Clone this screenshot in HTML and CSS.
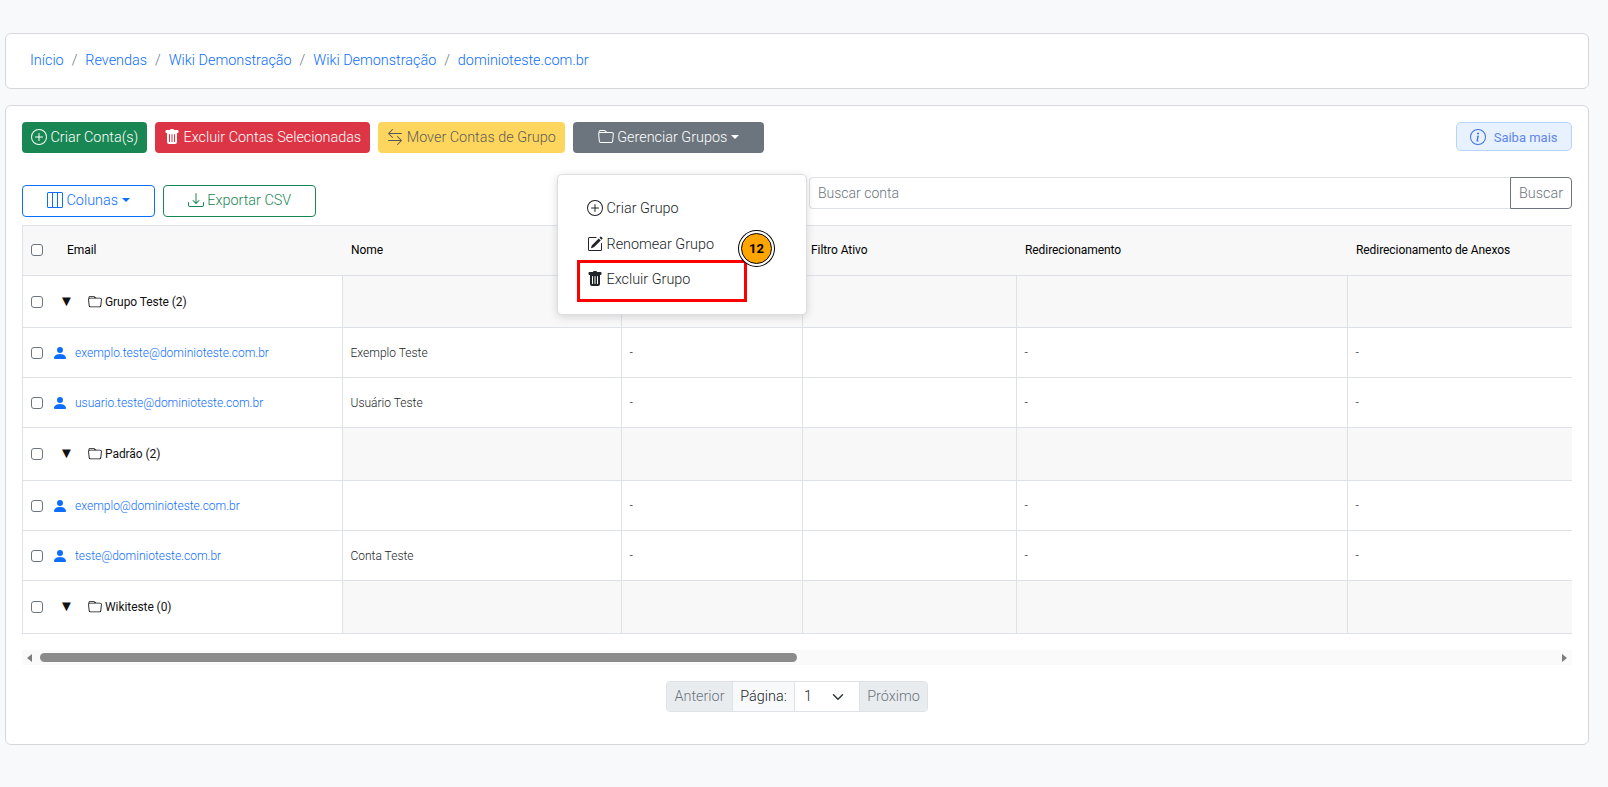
FILE: index.html
```html
<!DOCTYPE html>
<html lang="pt-BR">
<head>
    <meta charset="UTF-8">
    <meta name="viewport" content="width=device-width, initial-scale=1.0">
    <title>Contas de Email</title>
    <link rel="stylesheet" href="styles.css">
</head>
<body>
    <!-- icons -->
    <svg class="sprite" xmlns="http://www.w3.org/2000/svg">
        <symbol id="i-plus" viewBox="0 0 16 16"><path d="M8 15A7 7 0 1 1 8 1a7 7 0 0 1 0 14zm0 1A8 8 0 1 0 8 0a8 8 0 0 0 0 16z"/><path d="M8 4a.5.5 0 0 1 .5.5v3h3a.5.5 0 0 1 0 1h-3v3a.5.5 0 0 1-1 0v-3h-3a.5.5 0 0 1 0-1h3v-3A.5.5 0 0 1 8 4z"/></symbol>
        <symbol id="i-trash" viewBox="0 0 16 16"><path d="M2.5 1a1 1 0 0 0-1 1v1a1 1 0 0 0 1 1H3v9a2 2 0 0 0 2 2h6a2 2 0 0 0 2-2V4h.5a1 1 0 0 0 1-1V2a1 1 0 0 0-1-1H10a1 1 0 0 0-1-1H7a1 1 0 0 0-1 1H2.5zm3 4a.5.5 0 0 1 .5.5v7a.5.5 0 0 1-1 0v-7a.5.5 0 0 1 .5-.5zM8 5a.5.5 0 0 1 .5.5v7a.5.5 0 0 1-1 0v-7A.5.5 0 0 1 8 5zm3 .5v7a.5.5 0 0 1-1 0v-7a.5.5 0 0 1 1 0z"/></symbol>
        <symbol id="i-arrows" viewBox="0 0 16 16"><path d="M1 11.5a.5.5 0 0 0 .5.5h11.793l-3.147 3.146a.5.5 0 0 0 .708.708l4-4a.5.5 0 0 0 0-.708l-4-4a.5.5 0 0 0-.708.708L13.293 11H1.5a.5.5 0 0 0-.5.5zm14-7a.5.5 0 0 1-.5.5H2.707l3.147 3.146a.5.5 0 1 1-.708.708l-4-4a.5.5 0 0 1 0-.708l4-4a.5.5 0 1 1 .708.708L2.707 4H14.5a.5.5 0 0 1 .5.5z"/></symbol>
        <symbol id="i-folder" viewBox="0 0 16 16"><path d="M.54 3.87.5 3a2 2 0 0 1 2-2h3.672a2 2 0 0 1 1.414.586l.828.828A2 2 0 0 0 9.828 3h3.982a2 2 0 0 1 1.992 2.181l-.637 7A2 2 0 0 1 13.174 14H2.826a2 2 0 0 1-1.991-1.819l-.637-7a1.99 1.99 0 0 1 .342-1.31zM2.19 4a1 1 0 0 0-.996 1.09l.637 7a1 1 0 0 0 .995.91h10.348a1 1 0 0 0 .995-.91l.637-7A1 1 0 0 0 13.81 4H2.19zm4.69-1.707A1 1 0 0 0 6.172 2H2.5a1 1 0 0 0-1 .981l.006.139C1.72 3.042 1.95 3 2.19 3h5.396l-.707-.707z"/></symbol>
        <symbol id="i-columns" viewBox="0 0 16 16"><path d="M0 1.5A1.5 1.5 0 0 1 1.5 0h13A1.5 1.5 0 0 1 16 1.5v13a1.5 1.5 0 0 1-1.5 1.5h-13A1.5 1.5 0 0 1 0 14.5v-13zM1.5 1a.5.5 0 0 0-.5.5v13a.5.5 0 0 0 .5.5H5V1H1.5zM10 15V1H6v14h4zm1 0h3.5a.5.5 0 0 0 .5-.5v-13a.5.5 0 0 0-.5-.5H11v14z"/></symbol>
        <symbol id="i-download" viewBox="0 0 16 16"><path d="M.5 9.9a.5.5 0 0 1 .5.5v2.5a1 1 0 0 0 1 1h12a1 1 0 0 0 1-1v-2.5a.5.5 0 0 1 1 0v2.5a2 2 0 0 1-2 2H2a2 2 0 0 1-2-2v-2.5a.5.5 0 0 1 .5-.5z"/><path d="M7.646 11.854a.5.5 0 0 0 .708 0l3-3a.5.5 0 0 0-.708-.708L8.5 10.293V1.5a.5.5 0 0 0-1 0v8.793L5.354 8.146a.5.5 0 1 0-.708.708l3 3z"/></symbol>
        <symbol id="i-info" viewBox="0 0 16 16"><path d="M8 15A7 7 0 1 1 8 1a7 7 0 0 1 0 14zm0 1A8 8 0 1 0 8 0a8 8 0 0 0 0 16z"/><path d="m8.93 6.588-2.29.287-.082.38.45.083c.294.07.352.176.288.469l-.738 3.468c-.194.897.105 1.319.808 1.319.545 0 1.178-.252 1.465-.598l.088-.416c-.2.176-.492.246-.686.246-.275 0-.375-.193-.304-.533L8.93 6.588zM9 4.5a1 1 0 1 1-2 0 1 1 0 0 1 2 0z"/></symbol>
        <symbol id="i-edit" viewBox="0 0 16 16"><path d="M15.502 1.94a.5.5 0 0 1 0 .706L14.459 3.69l-2-2L13.502.646a.5.5 0 0 1 .707 0l1.293 1.293zm-1.75 2.456-2-2L4.939 9.21a.5.5 0 0 0-.121.196l-.805 2.414a.25.25 0 0 0 .316.316l2.414-.805a.5.5 0 0 0 .196-.12l6.813-6.814z"/><path d="M1 13.5A1.5 1.5 0 0 0 2.5 15h11a1.5 1.5 0 0 0 1.5-1.5v-6a.5.5 0 0 0-1 0v6a.5.5 0 0 1-.5.5h-11a.5.5 0 0 1-.5-.5v-11a.5.5 0 0 1 .5-.5H9a.5.5 0 0 0 0-1H2.5A1.5 1.5 0 0 0 1 2.5v11z"/></symbol>
        <symbol id="i-person" viewBox="0 0 16 16"><path d="M3 14s-1 0-1-1 1-4 6-4 6 3 6 4-1 1-1 1H3zm5-6a3 3 0 1 0 0-6 3 3 0 0 0 0 6z"/></symbol>
    </svg>

    <nav class="card breadcrumb-card">
        <a href="#">Início</a><span class="sep">/</span>
        <a href="#">Revendas</a><span class="sep">/</span>
        <a href="#">Wiki Demonstração</a><span class="sep">/</span>
        <a href="#">Wiki Demonstração</a><span class="sep">/</span>
        <a href="#">dominioteste.com.br</a>
    </nav>

    <main class="card main-card">
        <div class="toolbar">
            <button class="btn btn-success"><svg class="icon"><use href="#i-plus"/></svg> Criar Conta(s)</button>
            <button class="btn btn-danger"><svg class="icon"><use href="#i-trash"/></svg> Excluir Contas Selecionadas</button>
            <button class="btn btn-warning"><svg class="icon"><use href="#i-arrows"/></svg> Mover Contas de Grupo</button>
            <button class="btn btn-secondary btn-groups"><svg class="icon"><use href="#i-folder"/></svg> Gerenciar Grupos<span class="caret"></span></button>
            <button class="btn-info"><svg class="icon"><use href="#i-info"/></svg> Saiba mais</button>
        </div>

        <div class="toolbar-second">
            <button class="btn btn-outline-primary btn-columns"><svg class="icon"><use href="#i-columns"/></svg> Colunas<span class="caret"></span></button>
            <button class="btn btn-outline-success btn-export"><svg class="icon"><use href="#i-download"/></svg> Exportar CSV</button>
            <div class="search-group">
                <input type="text" placeholder="Buscar conta">
                <button>Buscar</button>
            </div>
        </div>

        <div class="table-wrap">
            <table>
                <colgroup>
                    <col class="col-email"><col class="col-name"><col class="col-third"><col class="col-filter"><col class="col-redirect"><col class="col-attach"><col class="col-rest">
                </colgroup>
                <thead>
                    <tr>
                        <th><div class="cell-head"><input type="checkbox" class="check"><span>Email</span></div></th>
                        <th>Nome</th>
                        <th></th>
                        <th>Filtro Ativo</th>
                        <th>Redirecionamento</th>
                        <th>Redirecionamento de Anexos</th>
                        <th></th>
                    </tr>
                </thead>
                <tbody>
                    <tr class="group">
                        <td><div class="cell-group"><input type="checkbox" class="check"><span class="arrow">▼</span><svg class="icon"><use href="#i-folder"/></svg><span>Grupo Teste (2)</span></div></td>
                        <td></td><td></td><td></td><td></td><td></td><td></td>
                    </tr>
                    <tr>
                        <td><div class="cell-account"><input type="checkbox" class="check"><svg class="icon person"><use href="#i-person"/></svg><a href="#">exemplo.teste@dominioteste.com.br</a></div></td>
                        <td>Exemplo Teste</td><td>-</td><td></td><td>-</td><td>-</td><td></td>
                    </tr>
                    <tr>
                        <td><div class="cell-account"><input type="checkbox" class="check"><svg class="icon person"><use href="#i-person"/></svg><a href="#">usuario.teste@dominioteste.com.br</a></div></td>
                        <td>Usuário Teste</td><td>-</td><td></td><td>-</td><td>-</td><td></td>
                    </tr>
                    <tr class="group">
                        <td><div class="cell-group"><input type="checkbox" class="check"><span class="arrow">▼</span><svg class="icon"><use href="#i-folder"/></svg><span>Padrão (2)</span></div></td>
                        <td></td><td></td><td></td><td></td><td></td><td></td>
                    </tr>
                    <tr>
                        <td><div class="cell-account"><input type="checkbox" class="check"><svg class="icon person"><use href="#i-person"/></svg><a href="#">exemplo@dominioteste.com.br</a></div></td>
                        <td></td><td>-</td><td></td><td>-</td><td>-</td><td></td>
                    </tr>
                    <tr>
                        <td><div class="cell-account"><input type="checkbox" class="check"><svg class="icon person"><use href="#i-person"/></svg><a href="#">teste@dominioteste.com.br</a></div></td>
                        <td>Conta Teste</td><td>-</td><td></td><td>-</td><td>-</td><td></td>
                    </tr>
                    <tr class="group">
                        <td><div class="cell-group"><input type="checkbox" class="check"><span class="arrow">▼</span><svg class="icon"><use href="#i-folder"/></svg><span>Wikiteste (0)</span></div></td>
                        <td></td><td></td><td></td><td></td><td></td><td></td>
                    </tr>
                </tbody>
            </table>
        </div>

        <div class="scrollbar">
            <span class="scroll-arrow left"></span>
            <div class="scroll-track"><div class="scroll-thumb"></div></div>
            <span class="scroll-arrow right"></span>
        </div>

        <div class="pagination">
            <button class="page-btn page-prev">Anterior</button>
            <span class="page-label">Página:</span>
            <div class="page-select">1
                <svg viewBox="0 0 16 16"><path fill="none" stroke="#343a40" stroke-linecap="round" stroke-linejoin="round" stroke-width="2" d="m2 5 6 6 6-6"/></svg>
            </div>
            <button class="page-btn page-next">Próximo</button>
        </div>

        <!-- open menu of Gerenciar Grupos -->
        <div class="dropdown">
            <a class="dropdown-item" href="#"><svg class="icon"><use href="#i-plus"/></svg> Criar Grupo</a>
            <a class="dropdown-item" href="#"><svg class="icon"><use href="#i-edit"/></svg> Renomear Grupo</a>
            <a class="dropdown-item" href="#"><svg class="icon"><use href="#i-trash"/></svg> Excluir Grupo</a>
            <div class="highlight"></div>
            <div class="step-badge">12</div>
        </div>
    </main>
</body>
</html>
```

FILE: styles.css
```css
* {
    box-sizing: border-box;
}

body {
    margin: 0;
    padding: 33px 19px 0 5px;
    background-color: #f8f9fa;
    font-family: Roboto, "Liberation Sans", sans-serif;
    font-size: 14.4px;
    font-weight: 300;
    color: #212529;
}

a {
    color: #0d6efd;
    text-decoration: none;
}

button {
    font-family: inherit;
    font-weight: 300;
}

.sprite {
    display: none;
}

.icon {
    width: 16px;
    height: 16px;
    fill: currentColor;
    vertical-align: -3px;
    flex-shrink: 0;
}

.card {
    background-color: #fff;
    border: 1px solid #d5d7da;
    border-radius: 6px;
}

.breadcrumb-card {
    height: 56px;
    padding: 17px 24px 0;
    line-height: 20px;
    margin-bottom: 16px;
}

.sep {
    color: #6c757d;
    padding: 0 4.4px 0 8px;
}

.main-card {
    position: relative;
    height: 640px;
    padding: 16px;
}

.toolbar {
    display: flex;
    gap: 8px;
    align-items: flex-start;
}

.btn {
    height: 31px;
    padding: 0 8px 1px;
    border: 1px solid transparent;
    border-radius: 4px;
    font-size: 14.4px;
    white-space: nowrap;
}

.btn-success { background-color: #198754; color: #fff; width: 125px; }
.btn-danger { background-color: #dc3545; color: #fff; width: 215px; }
.btn-warning { background-color: #ffc107; color: #000; width: 187px; opacity: .65; }
.btn-secondary { background-color: #6c757d; color: #fff; }
.btn-groups { width: 191px; }

.caret {
    display: inline-block;
    margin-left: 4px;
    vertical-align: 3px;
    border-top: 4px solid;
    border-left: 4px solid transparent;
    border-right: 4px solid transparent;
}

.btn-info {
    margin-left: auto;
    width: 116px;
    height: 29px;
    background-color: #e7f1ff;
    border: 1px solid #b6d4fe;
    border-radius: 5px;
    color: #5f86ea;
    font-size: 13px;
    font-weight: 400;
}

.btn-info .icon {
    margin-right: 4px;
    color: #3d6fe0;
}

.toolbar-second {
    display: flex;
    align-items: flex-start;
    gap: 8px;
    margin-top: 24px;
    margin-bottom: 16px;
    height: 32px;
}

.btn-columns,
.btn-export {
    height: 32px;
    margin-top: 8px;
    padding-bottom: 2px;
    background-color: #fff;
}

.btn-outline-primary { border-color: #0d6efd; color: #0d6efd; width: 133px; }
.btn-outline-success { border-color: #198754; color: #198754; width: 153px; }

.search-group {
    display: flex;
    margin-left: auto;
    width: 763px;
    height: 32px;
}

.search-group input {
    flex: 1;
    border: 1px solid #dee2e6;
    border-right: none;
    border-radius: 4px 0 0 4px;
    padding: 0 8px;
    font-family: inherit;
    font-size: 14px;
    font-weight: 300;
    outline: none;
}

.search-group input::placeholder {
    color: #6c757d;
}

.search-group button {
    width: 62px;
    background-color: #fff;
    border: 1px solid #6c757d;
    border-radius: 0 4px 4px 0;
    color: #6c757d;
    font-size: 14.4px;
    padding: 0;
}

.table-wrap {
    overflow: hidden;
    width: 100%;
    border-left: 1px solid #dee2e6;
}

table {
    table-layout: fixed;
    border-collapse: collapse;
    width: 2100px;
    font-size: 12px;
    font-weight: 300;
}

.col-email { width: 319px; }
.col-name { width: 279px; }
.col-third { width: 181px; }
.col-filter { width: 214px; }
.col-redirect { width: 331px; }
.col-attach { width: 400px; }

th {
    height: 50px;
    padding: 0 8px 2px 9px;
    background-color: #f8f8f8;
    border-top: 1px solid #dee2e6;
    border-bottom: 1px solid #dee2e6;
    font-weight: 400;
    letter-spacing: -.07px;
    color: #000;
    text-align: left;
}

th:first-child {
    padding-left: 8px;
}

td {
    height: 50px;
    padding: 0 8px;
    border: 1px solid #dee2e6;
    color: #212529;
}

td:first-child {
    border-left: none;
}

.group td {
    height: 52px;
    background-color: #f8f8f8;
}

.group:not(:first-child) td {
    height: 53px;
}

.group td:first-child {
    background-color: #fff;
    font-weight: 400;
    letter-spacing: -.07px;
    color: #111;
}

.check {
    appearance: none;
    width: 12px;
    height: 12px;
    margin: 0;
    background-color: #fff;
    border: 1px solid #6c757d;
    border-radius: 3px;
    flex-shrink: 0;
}

.cell-head,
.cell-group,
.cell-account {
    display: flex;
    align-items: center;
}

.cell-head span { margin-left: 24px; }

.arrow {
    width: 14px;
    margin-left: 16px;
    margin-top: -1px;
    font-size: 15px;
    line-height: 1;
    text-align: center;
    color: #111;
}

.cell-group .icon {
    margin-left: 15px;
    margin-right: 3px;
    width: 14px;
    height: 14px;
}

.person {
    margin-left: 9px;
    margin-right: 7px;
    color: #0d6efd;
    width: 16px;
    height: 16px;
}

.cell-account a {
    font-weight: 300;
    font-size: 12px;
}

.scrollbar {
    display: flex;
    align-items: center;
    height: 15px;
    margin-top: 16px;
    background-color: #fafafa;
}

.scroll-arrow {
    width: 0;
    height: 0;
    border-top: 4px solid transparent;
    border-bottom: 4px solid transparent;
    flex-shrink: 0;
}

.scroll-arrow.left {
    margin-left: 5px;
    border-right: 5px solid #7d7d7d;
}

.scroll-arrow.right {
    margin-right: 5px;
    border-left: 5px solid #7d7d7d;
}

.scroll-track {
    flex: 1;
    padding: 0 8px;
}

.scroll-thumb {
    width: 757px;
    height: 9px;
    background-color: #8b8b8b;
    border-radius: 5px;
}

.pagination {
    display: flex;
    width: 262px;
    height: 31px;
    margin: 16px auto 0;
    border: 1px solid #dee2e6;
    border-radius: 4px;
    overflow: hidden;
    font-size: 14.4px;
}

.page-btn {
    padding: 0;
    border: none;
    background-color: #e9ecef;
    color: #6c757d;
    font-size: 14.4px;
}

.page-prev { width: 65px; }
.page-next { width: 67px; }

.page-label {
    width: 63px;
    line-height: 29px;
    text-align: center;
    background-color: #f8f9fa;
    border-left: 1px solid #dee2e6;
    border-right: 1px solid #dee2e6;
}

.page-select {
    display: flex;
    align-items: center;
    justify-content: space-between;
    width: 65px;
    padding: 0 15px 0 9px;
    border-right: 1px solid #dee2e6;
}

.page-select svg {
    width: 12px;
    height: 12px;
}

.dropdown {
    position: absolute;
    left: 551px;
    top: 68px;
    width: 250px;
    height: 141px;
    padding: 16px 0;
    background-color: #fff;
    border: 1px solid #dcdee2;
    border-radius: 5px;
    box-shadow: 0 2px 8px rgba(0, 0, 0, .15);
}

.dropdown-item {
    display: block;
    height: 35.5px;
    padding-left: 29px;
    line-height: 36px;
    color: #212529;
}

.highlight {
    position: absolute;
    left: 19px;
    top: 85px;
    width: 170px;
    height: 42px;
    border: 3px solid #f00;
}

.step-badge {
    position: absolute;
    left: 180px;
    top: 55px;
    width: 31px;
    height: 31px;
    margin: 3px;
    background-color: #ffa500;
    border: 1px solid #000;
    border-radius: 50%;
    box-shadow: 0 0 0 2px #fff, 0 0 0 3px #000;
    font-size: 13px;
    font-weight: 700;
    line-height: 29px;
    text-align: center;
    color: #000;
}
```
